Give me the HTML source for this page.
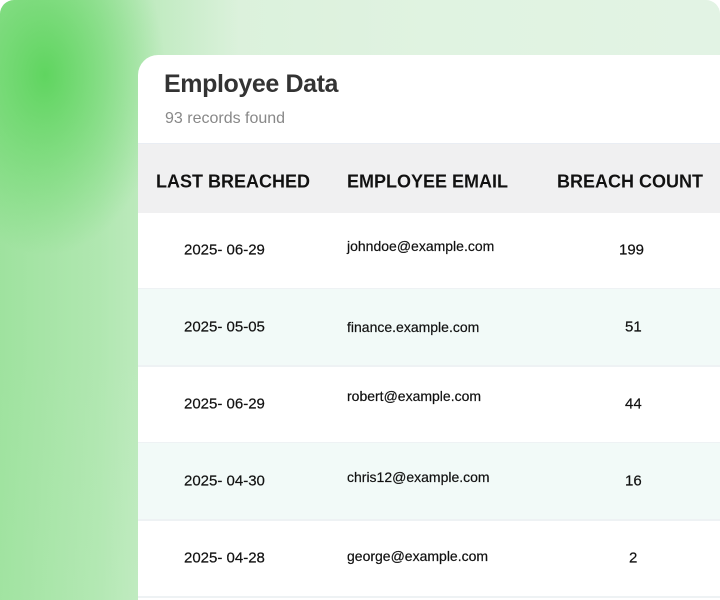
<!DOCTYPE html>
<html><head><style>
html,body{margin:0;padding:0;background:#fff;}
.wrap{position:relative;width:720px;height:600px;overflow:hidden;border-radius:14px 14px 0 0;
background:
radial-gradient(ellipse 120px 180px at 45px 75px, rgba(92,212,92,0.95), rgba(92,212,92,0) 100%),
linear-gradient(90deg, rgba(140,222,140,0.75) 0%, rgba(150,225,150,0.6) 100px, rgba(160,228,160,0) 240px),
linear-gradient(180deg, rgba(255,255,255,0) 60%, rgba(230,245,230,0.6) 100%),
linear-gradient(90deg,#d6efd6,#e0f3e1 60%,#e2f3e4);}
.card{position:absolute;left:138px;top:55px;width:600px;height:560px;background:#fff;border-radius:20px 0 0 0;overflow:hidden;font-family:"Liberation Sans",sans-serif;}
h1{position:absolute;left:26px;top:15px;margin:0;font-size:25px;font-weight:bold;color:#333;letter-spacing:-0.4px;}
.sub{position:absolute;left:27px;top:55px;font-size:16px;color:#888;}
.head{position:absolute;left:0;top:88px;width:600px;height:69px;background:#f0f0f1;border-top:1px solid #e9edf3;font-size:18px;font-weight:bold;color:#111;letter-spacing:0px;}
.head span{top:55%!important;}
.head span,.row span{position:absolute;top:50%;transform:translateY(-50%);white-space:nowrap;}
.row{position:absolute;left:0;width:600px;height:76px;border-bottom:2px solid #eef2f4;font-size:15px;color:#111;}
.row span{-webkit-text-stroke:0.2px #111;}
.alt{background:#f2faf8;}
</style></head><body>
<div class="wrap">
<div class="card">
<h1>Employee Data</h1>
<div class="sub">93 records found</div>
<div class="head"><span style="left:18px">LAST BREACHED</span><span style="left:209px">EMPLOYEE EMAIL</span><span style="left:419px">BREACH COUNT</span></div>
<div class="row" style="top:157px"><span style="left:46px">2025- 06-29</span><span style="left:209px;top:45%;font-size:14px">johndoe@example.com</span><span style="left:481px">199</span></div>
<div class="row alt" style="top:234px"><span style="left:46px">2025- 05-05</span><span style="left:209px;font-size:14px">finance.example.com</span><span style="left:487px">51</span></div>
<div class="row" style="top:311px"><span style="left:46px">2025- 06-29</span><span style="left:209px;top:40%;font-size:14px">robert@example.com</span><span style="left:487px">44</span></div>
<div class="row alt" style="top:388px"><span style="left:46px">2025- 04-30</span><span style="left:209px;top:45%;font-size:14px">chris12@example.com</span><span style="left:487px">16</span></div>
<div class="row" style="top:465px"><span style="left:46px">2025- 04-28</span><span style="left:209px;top:48%;font-size:14px">george@example.com</span><span style="left:491px">2</span></div>
</div>
</div>
</body></html>
